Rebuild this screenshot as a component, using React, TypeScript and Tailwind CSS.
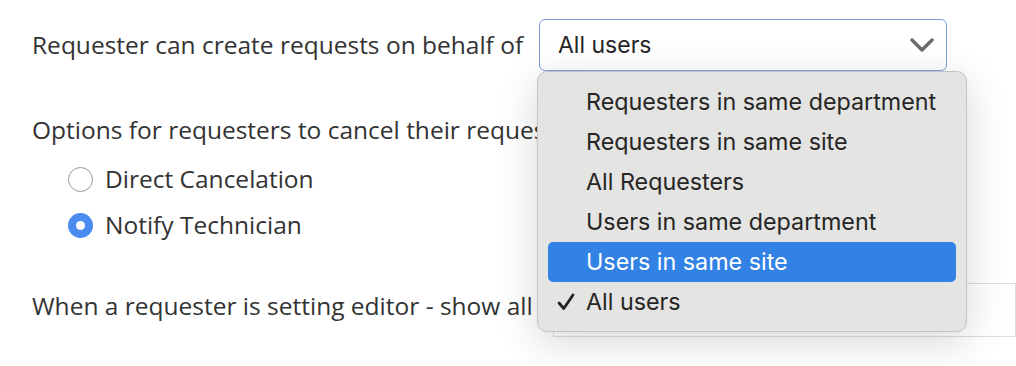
const MENU = [
  'Requesters in same department',
  'Requesters in same site',
  'All Requesters',
  'Users in same department',
  'Users in same site',
  'All users',
]

const HOVER = 'Users in same site'
const SELECTED = 'All users'

function Chevron() {
  return (
    <svg width="24" height="14" viewBox="0 0 24 14" fill="none" aria-hidden>
      <path d="M2 2l10 10L22 2" stroke="#6b6b6b" strokeWidth="3.4" strokeLinecap="round" strokeLinejoin="round" />
    </svg>
  )
}

function Check() {
  return (
    <svg width="18" height="18" viewBox="0 0 18 18" fill="none" aria-hidden>
      <path d="M2 10l4.8 5.5L16 2" stroke="#222" strokeWidth="2.8" strokeLinecap="round" strokeLinejoin="round" />
    </svg>
  )
}

function Radio({ checked, label }: { checked?: boolean; label: string }) {
  return (
    <label className="flex h-[46px] items-center gap-[12px]">
      {checked ? (
        <span className="flex h-[25px] w-[25px] items-center justify-center rounded-full bg-[#4a8cf0]">
          <span className="h-[9px] w-[9px] rounded-full bg-white" />
        </span>
      ) : (
        <span className="h-[25px] w-[25px] rounded-full border border-[#9a9a9a] bg-white" />
      )}
      <span>{label}</span>
    </label>
  )
}

function Menu() {
  return (
    <div className="absolute left-[-2px] top-[52px] z-10 w-[430px] rounded-[10px] border border-[#c4c4c4] bg-[#e4e4e2] px-[10px] pb-[9px] pt-[10px] shadow-[0_10px_40px_rgba(0,0,0,0.16)] font-['Inter',sans-serif] text-[23.3px] text-[#262626]">
      {MENU.map((m) => (
        <div
          key={m}
          className={`flex h-[40px] items-center rounded-[5px] ${m === HOVER ? 'bg-[#3182e4] text-white' : ''}`}
        >
          <span className="flex w-[38px] pl-[9px]">{m === SELECTED ? <Check /> : null}</span>
          <span>{m}</span>
        </div>
      ))}
    </div>
  )
}

export default function App() {
  return (
    <div className="relative h-[366px] w-[1016px] overflow-hidden bg-white font-['Open_Sans',sans-serif] text-[24.5px] text-[#333333]">
      <div className="pl-[32px] pt-[19px]">
        <div className="flex items-center">
          <span className="w-[507px] whitespace-nowrap">Requester can create requests on behalf of</span>
          <div className="relative">
            <div className="flex h-[52px] w-[408px] items-center justify-between rounded-[6px] border border-[#7a9fe0] bg-white pl-[18px] pr-[12px] font-['Inter',sans-serif] text-[23px] text-[#262626]">
              <span>All users</span>
              <Chevron />
            </div>
            <Menu />
          </div>
        </div>

        <div className="mt-[41px] flex h-[36px] items-center whitespace-nowrap">Options for requesters to cancel their requests</div>
        <div className="mt-[8px] pl-[36px]">
          <Radio label="Direct Cancelation" />
          <Radio checked label="Notify Technician" />
        </div>

        <div className="mt-[35px] flex items-center">
          <span className="mb-[8px] w-[521px] shrink-0 overflow-hidden whitespace-nowrap">When a requester is setting editor - show all requesters</span>
          <div className="h-[54px] flex-1 border border-[#dedede] bg-white" />
        </div>
      </div>
    </div>
  )
}
